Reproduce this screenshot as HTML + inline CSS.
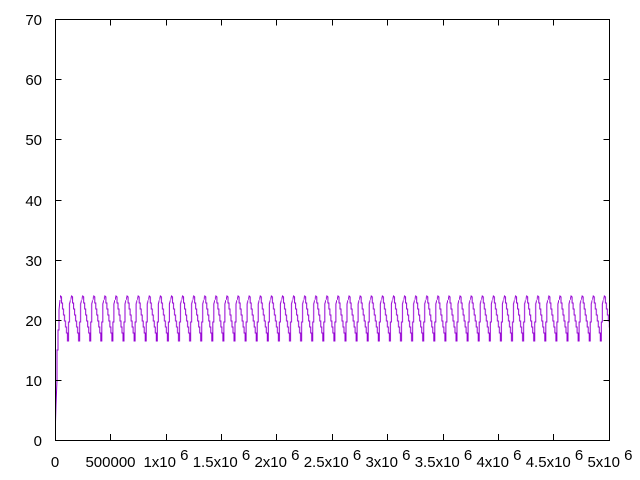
<!DOCTYPE html>
<html><head><meta charset="utf-8"><style>
html,body{margin:0;padding:0;background:#fff;}
svg{display:block;font-family:"Liberation Sans",sans-serif;font-size:15px;}
</style></head><body>
<svg width="640" height="480" viewBox="0 0 640 480" xmlns="http://www.w3.org/2000/svg">
<defs>
<pattern id="w" patternUnits="userSpaceOnUse" x="59.5" y="0" width="11.1" height="480">
<polyline fill="none" stroke="#9400d3" stroke-width="1" points="0,300 1,296 2,297 2,303 3,303 3,309 4,309 4,315 5,315 5,321 6,321 6,327 7,327 7,333 8,333 8,341 9,341 9,322 10,322 10,304 11.1,300"/>
</pattern>
</defs>
<rect x="60" y="290" width="549" height="60" fill="url(#w)"/>
<polyline fill="none" stroke="#9400d3" stroke-width="1" points="55.5,422 56,405 57,380 57,350 58,350 58,330 59,330 59,310 60,300"/>
<g stroke="#000" stroke-width="1" fill="none">
<rect x="55.5" y="19.5" width="554" height="421"/>
<path d="M55.5 380.5h6M55.5 320.5h6M55.5 260.5h6M55.5 200.5h6M55.5 139.5h6M55.5 79.5h6
M609.5 380.5h-6M609.5 320.5h-6M609.5 260.5h-6M609.5 200.5h-6M609.5 139.5h-6M609.5 79.5h-6
M110.5 440v-6M166.5 440v-6M221.5 440v-6M276.5 440v-6M332.5 440v-6M387.5 440v-6M443.5 440v-6M498.5 440v-6M553.5 440v-6
M110.5 19.5v6M166.5 19.5v6M221.5 19.5v6M276.5 19.5v6M332.5 19.5v6M387.5 19.5v6M443.5 19.5v6M498.5 19.5v6M553.5 19.5v6"/>
</g>
<g text-anchor="end" fill="#000">
<text x="42" y="446">0</text><text x="42" y="386">10</text><text x="42" y="326">20</text><text x="42" y="266">30</text><text x="42" y="206">40</text><text x="42" y="145">50</text><text x="42" y="85">60</text><text x="42" y="25">70</text>
</g>
<g text-anchor="middle" fill="#000">
<text x="55" y="467">0</text>
<text x="110.5" y="467">500000</text>
<text x="166" y="467">1x10<tspan dy="-7"> 6</tspan></text>
<text x="221.5" y="467">1.5x10<tspan dy="-7"> 6</tspan></text>
<text x="277" y="467">2x10<tspan dy="-7"> 6</tspan></text>
<text x="332.5" y="467">2.5x10<tspan dy="-7"> 6</tspan></text>
<text x="388" y="467">3x10<tspan dy="-7"> 6</tspan></text>
<text x="443.5" y="467">3.5x10<tspan dy="-7"> 6</tspan></text>
<text x="499" y="467">4x10<tspan dy="-7"> 6</tspan></text>
<text x="554.5" y="467">4.5x10<tspan dy="-7"> 6</tspan></text>
<text x="610" y="467">5x10<tspan dy="-7"> 6</tspan></text>
</g>
</svg>
</body></html>
